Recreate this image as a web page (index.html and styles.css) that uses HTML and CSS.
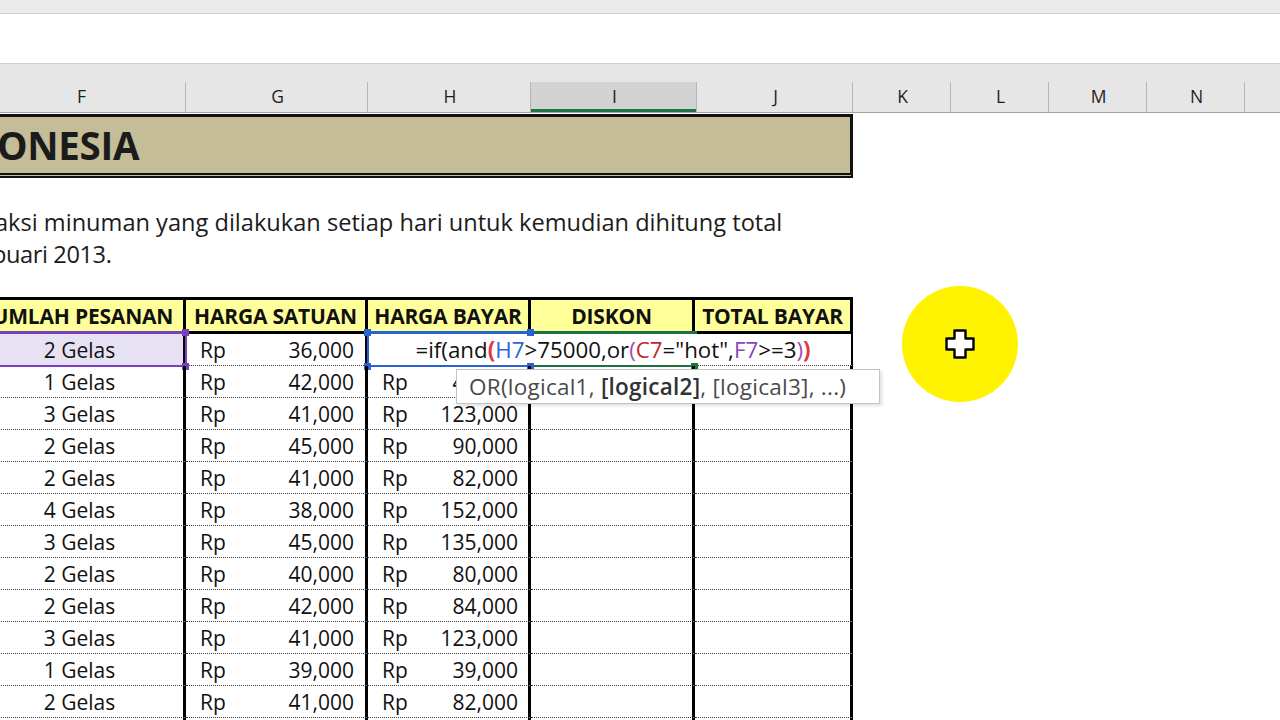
FILE: index.html
```html
<!DOCTYPE html>
<html lang="id">
<head>
<meta charset="utf-8">
<title>Excel - Penjualan Minuman</title>
<link rel="stylesheet" href="styles.css">
</head>
<body>
<div class="screen">
  <div class="top-strip"></div>
  <div class="formula-bar"></div>
  <div class="hdr-gap"></div>
  <div class="col-hdr">
    <div class="ch">F</div>
    <div class="ch">G</div>
    <div class="ch">H</div>
    <div class="ch sel">I</div>
    <div class="ch">J</div>
    <div class="ch">K</div>
    <div class="ch">L</div>
    <div class="ch">M</div>
    <div class="ch">N</div>
    <div class="ch">O</div>
  </div>

  <div class="sheet">
    <div class="title-box"><span class="title-text">ONESIA</span></div>
    <div class="desc">
      <p>aksi minuman yang dilakukan setiap hari untuk kemudian dihitung total</p>
      <p class="d2">puari 2013.</p>
    </div>

    <div class="tbl">
      <div class="thead">
        <div class="hc">JUMLAH PESANAN</div>
        <div class="hc">HARGA SATUAN</div>
        <div class="hc">HARGA BAYAR</div>
        <div class="hc">DISKON</div>
        <div class="hc">TOTAL BAYAR</div>
      </div>

      <div class="tr active">
        <div class="c qty ref-fill">2 Gelas</div>
        <div class="c money"><span>Rp</span><span>36,000</span></div>
        <div class="c"></div>
        <div class="c"></div>
        <div class="c"></div>
        <div class="ref ref-purple"></div>
        <div class="ref ref-blue"></div>
        <div class="ref ref-green"></div>
        <div class="editor"><span class="ftext">=if(and<span class="p1">(</span><span class="r1">H7</span>&gt;75000,or<span class="p2">(</span><span class="r2">C7</span>="hot",<span class="r3">F7</span>&gt;=3<span class="p2">)</span><span class="p1">)</span></span></div>
        <span class="hd hd-p hd-a"></span>
        <span class="hd hd-p hd-b"></span>
        <span class="hd hd-b1"></span>
        <span class="hd hd-b2"></span>
        <span class="hd hd-b3"></span>
        <span class="hd hd-b4"></span>
        <span class="hd hd-g"></span>
      </div>

      <div class="tr"><div class="c qty">1 Gelas</div><div class="c money"><span>Rp</span><span>42,000</span></div><div class="c money"><span>Rp</span><span>42,000</span></div><div class="c"></div><div class="c"></div></div>
      <div class="tr"><div class="c qty">3 Gelas</div><div class="c money"><span>Rp</span><span>41,000</span></div><div class="c money"><span>Rp</span><span>123,000</span></div><div class="c"></div><div class="c"></div></div>
      <div class="tr"><div class="c qty">2 Gelas</div><div class="c money"><span>Rp</span><span>45,000</span></div><div class="c money"><span>Rp</span><span>90,000</span></div><div class="c"></div><div class="c"></div></div>
      <div class="tr"><div class="c qty">2 Gelas</div><div class="c money"><span>Rp</span><span>41,000</span></div><div class="c money"><span>Rp</span><span>82,000</span></div><div class="c"></div><div class="c"></div></div>
      <div class="tr"><div class="c qty">4 Gelas</div><div class="c money"><span>Rp</span><span>38,000</span></div><div class="c money"><span>Rp</span><span>152,000</span></div><div class="c"></div><div class="c"></div></div>
      <div class="tr"><div class="c qty">3 Gelas</div><div class="c money"><span>Rp</span><span>45,000</span></div><div class="c money"><span>Rp</span><span>135,000</span></div><div class="c"></div><div class="c"></div></div>
      <div class="tr"><div class="c qty">2 Gelas</div><div class="c money"><span>Rp</span><span>40,000</span></div><div class="c money"><span>Rp</span><span>80,000</span></div><div class="c"></div><div class="c"></div></div>
      <div class="tr"><div class="c qty">2 Gelas</div><div class="c money"><span>Rp</span><span>42,000</span></div><div class="c money"><span>Rp</span><span>84,000</span></div><div class="c"></div><div class="c"></div></div>
      <div class="tr"><div class="c qty">3 Gelas</div><div class="c money"><span>Rp</span><span>41,000</span></div><div class="c money"><span>Rp</span><span>123,000</span></div><div class="c"></div><div class="c"></div></div>
      <div class="tr"><div class="c qty">1 Gelas</div><div class="c money"><span>Rp</span><span>39,000</span></div><div class="c money"><span>Rp</span><span>39,000</span></div><div class="c"></div><div class="c"></div></div>
      <div class="tr"><div class="c qty">2 Gelas</div><div class="c money"><span>Rp</span><span>41,000</span></div><div class="c money"><span>Rp</span><span>82,000</span></div><div class="c"></div><div class="c"></div></div>
      <div class="tr"><div class="c qty">3 Gelas</div><div class="c money"><span>Rp</span><span>45,000</span></div><div class="c money"><span>Rp</span><span>135,000</span></div><div class="c"></div><div class="c"></div></div>
    </div>
  </div>

  <div class="tooltip"><span class="tip-text">OR(logical1, <b>[logical2]</b>, [logical3], ...)</span></div>

  <div class="cursor-spot">
    <svg class="cross" viewBox="0 0 30 30" width="30" height="30" aria-hidden="true">
      <path d="M9.5 1.5 H20.5 V9.5 H28.5 V20.5 H20.5 V28.5 H9.5 V20.5 H1.5 V9.5 H9.5 Z" fill="#fff" stroke="#000" stroke-width="2.4" stroke-linejoin="round"/>
    </svg>
  </div>
</div>
</body>
</html>
```

FILE: styles.css
```css
html, body {
  margin: 0;
  padding: 0;
  background: #fff;
}

body {
  font-family: "Open Sans", "Liberation Sans", sans-serif;
  color: #111;
}

.screen {
  position: relative;
  width: 1280px;
  height: 720px;
  overflow: hidden;
  background: #fff;
}

/* ---------- top chrome ---------- */
.top-strip {
  height: 13px;
  background: #ebebeb;
  border-bottom: 1px solid #cdcdcd;
}

.formula-bar {
  height: 49px;
  background: #fff;
  border-bottom: 1px solid #cdcdcd;
}

.hdr-gap {
  height: 18px;
  background: #e6e6e6;
}

.col-hdr {
  display: grid;
  grid-template-columns: 210px 182px 163px 166px 156px 98px 98px 98px 98px 98px;
  margin-left: -24px;
  height: 31px;
  box-sizing: border-box;
  background: #e6e6e6;
  border-bottom: 1px solid #a3a3a3;
}

.ch {
  display: flex;
  align-items: center;
  justify-content: center;
  border-right: 1px solid #b4b4b4;
  font-size: 17.5px;
  color: #1e1e1e;
  padding-bottom: 2px;
  padding-left: 2px;
  box-sizing: border-box;
}

.ch.sel {
  background: #d3d3d3;
  box-shadow: inset 0 -3px 0 #217346;
}

/* ---------- sheet ---------- */
.sheet {
  padding-top: 1px;
}

.title-box {
  margin-left: -24px;
  width: 877px;
  height: 64px;
  box-sizing: border-box;
  background: #c4bd97;
  border-top: 3px solid #111;
  border-right: 3px solid #111;
  border-bottom: 5px double #111;
  display: flex;
  align-items: center;
  padding-left: 21px;
}

.title-text {
  font-size: 38.5px;
  font-weight: 700;
  color: #1b1b1b;
  letter-spacing: -0.3px;
}

.desc {
  padding-top: 28px;
  margin-left: -5px;
  font-size: 23.6px;
  line-height: 32px;
  color: #1c1c1c;
}

.desc p {
  margin: 0;
  white-space: nowrap;
}

.desc .d2 {
  margin-left: -3px;
  letter-spacing: -0.4px;
}

/* ---------- table ---------- */
.tbl {
  margin-top: 27px;
  margin-left: -24px;
  width: 877px;
}

.thead,
.tr {
  display: grid;
  grid-template-columns: 210px 182px 163px 164px 158px;
}

.thead {
  height: 37px;
  box-sizing: border-box;
  border-top: 3px solid #000;
  border-bottom: 3px solid #000;
}

.hc {
  background: #ffff99;
  border-right: 3px solid #000;
  display: flex;
  align-items: center;
  justify-content: center;
  font-size: 21px;
  font-weight: 700;
  color: #111;
  white-space: nowrap;
  overflow: hidden;
  letter-spacing: -0.2px;
}

.tr {
  height: 32px;
  position: relative;
}

.c {
  box-sizing: border-box;
  height: 32px;
  border-right: 3px solid #000;
  border-bottom: 1px dotted #3a3a3a;
  display: flex;
  align-items: center;
  font-size: 21px;
  color: #111;
  white-space: nowrap;
}

.qty {
  justify-content: center;
}

.money {
  justify-content: space-between;
  padding: 0 11px 0 14px;
}

.tr .c:nth-child(3).money {
  padding-right: 10px;
}

.ref-fill {
  background: #e7e2f3;
}

/* reference outlines of the formula being edited */
.ref {
  position: absolute;
  box-sizing: border-box;
  pointer-events: none;
}

.ref-purple {
  left: -10px;
  top: -3px;
  width: 221px;
  height: 36px;
  border: 2px solid #7a3fbf;
  border-top-width: 3px;
}

.ref-blue {
  left: 391px;
  top: -3px;
  width: 165px;
  height: 36px;
  border: 2px solid #2a62d2;
  border-top-width: 3px;
}

.ref-green {
  left: 555px;
  top: -3px;
  width: 166px;
  height: 36px;
  border-top: 3px solid #1e7145;
  border-bottom: 2px solid #1e7145;
}

.editor {
  position: absolute;
  left: 394px;
  top: 0;
  width: 481px;
  height: 31px;
  box-sizing: border-box;
  padding-left: 5px;
  background: #fff;
  display: flex;
  align-items: center;
  justify-content: center;
  font-size: 22.3px;
  color: #111;
  white-space: nowrap;
}

.editor .p1 { color: #e0383e; font-weight: 700; }
.editor .p2 { color: #a54bb5; }
.editor .r1 { color: #2b65d6; }
.editor .r2 { color: #c0262d; }
.editor .r3 { color: #8a45b8; }

.hd {
  position: absolute;
  width: 7px;
  height: 7px;
  box-sizing: border-box;
}

.hd-p { background: #7a3fbf; left: 206px; }
.hd-a { top: -5px; }
.hd-b { top: 29px; }

.hd-b1, .hd-b2, .hd-b3, .hd-b4 { background: #2a62d2; }
.hd-b1 { left: 388px; top: -5px; }
.hd-b2 { left: 551px; top: -5px; }
.hd-b3 { left: 388px; top: 29px; }
.hd-b4 { left: 551px; top: 29px; }

.hd-g { background: #1e7145; left: 715px; top: 29px; }

/* ---------- overlays ---------- */
.tooltip {
  position: absolute;
  left: 456px;
  top: 369px;
  width: 424px;
  height: 35px;
  box-sizing: border-box;
  background: #fff;
  border: 1px solid #c4c4c4;
  box-shadow: 2px 2px 3px rgba(0, 0, 0, 0.12);
  padding-left: 12px;
  display: flex;
  align-items: center;
  font-size: 22.5px;
  color: #4a4a4a;
  white-space: nowrap;
}

.tip-text {
  letter-spacing: 0.25px;
}

.tooltip b {
  color: #333;
  font-weight: 600;
}

.cursor-spot {
  position: absolute;
  left: 902px;
  top: 286px;
  width: 116px;
  height: 116px;
  border-radius: 50%;
  background: #fff200;
  display: flex;
  align-items: center;
  justify-content: center;
}

.cross {
  display: block;
}
```
